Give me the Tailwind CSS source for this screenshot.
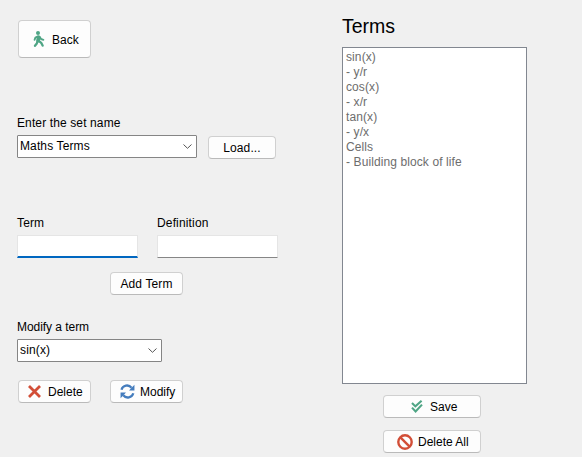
<!DOCTYPE html>
<html lang="en">
<head>
<meta charset="utf-8">
<title>Terms</title>
<script src="https://cdn.jsdelivr.net/npm/@tailwindcss/browser@4"></script>
</head>
<body class="flex h-[457px] w-[582px] overflow-hidden bg-[#f0f0f0] pl-[17px] font-['Liberation_Sans',Arial,sans-serif] text-[12px] leading-4 text-black">
  <main class="flex w-[325px] flex-col items-start pt-5">
    <button class="ml-px flex h-[38px] w-[73px] items-center rounded-[4px] border border-[#d0d0d0] border-b-[#bababa] bg-[#fdfdfd] pl-[14px]">
      <svg class="mr-[7px] h-4 w-3 shrink-0" viewBox="0 0 12 16" fill="none" stroke="#4fa585" stroke-linecap="round" stroke-linejoin="round">
        <circle cx="5" cy="2" r="2" fill="#4fa585" stroke="none"/>
        <path d="M5.6 6 5 9.6" stroke-width="3.6"/>
        <path d="M4.4 5.6 2.4 6.6 1.6 8.8M6.8 6 8 8 10.4 8.8" stroke-width="1.9"/>
        <path d="M4.6 10 3.8 12.5 2 14.8M5.8 9.8 8.2 11.8 9.6 14.6" stroke-width="2.3"/>
      </svg>
      <span class="pt-px">Back</span>
    </button>
    <label class="mt-[57px] tracking-[0.12px]">Enter the set name</label>
    <div class="mt-1 flex items-start">
      <div class="flex h-[23px] w-[180px] items-center justify-between rounded-[1px] border border-[#858585] bg-white pr-1 pl-[2px]">
        <span class="-mt-px tracking-[0.12px]">Maths Terms</span>
        <svg class="h-[5px] w-[9px]" viewBox="0 0 9 5" fill="none" stroke="#555"><path d="M.5.5 4.5 4.3 8.5.5"/></svg>
      </div>
      <button class="mt-px ml-[11px] flex h-[23px] w-[68px] items-center justify-center rounded-[4px] border border-[#d0d0d0] border-b-[#bababa] bg-[#fdfdfd] tracking-[0.12px]">Load...</button>
    </div>
    <div class="mt-[56px] flex gap-[19px] tracking-[0.15px]">
      <div>
        <label class="block">Term</label>
        <div class="mt-1 h-[23px] w-[121px] border border-b-2 border-[#e5e5e5] border-b-[#0067c0] bg-white"></div>
      </div>
      <div>
        <label class="block">Definition</label>
        <div class="mt-1 h-[23px] w-[121px] rounded-[1px] border border-[#e5e5e5] border-b-[#868686] bg-white"></div>
      </div>
    </div>
    <button class="mt-[14px] ml-[93px] flex h-[23px] w-[73px] items-center justify-center rounded-[4px] border border-[#d0d0d0] border-b-[#bababa] bg-[#fdfdfd] tracking-[0.12px]">Add Term</button>
    <label class="mt-6 -tracking-[0.05px]">Modify a term</label>
    <div class="mt-1 flex h-[23px] w-[145px] items-center justify-between rounded-[1px] border border-[#858585] bg-white pr-1 pl-[2px]">
      <span class="-mt-px tracking-[0.15px]">sin(x)</span>
      <svg class="h-[5px] w-[9px]" viewBox="0 0 9 5" fill="none" stroke="#555"><path d="M.5.5 4.5 4.3 8.5.5"/></svg>
    </div>
    <div class="mt-[18px] ml-px flex gap-[19px]">
      <button class="flex h-[23px] w-[73px] items-center rounded-[4px] border border-[#d0d0d0] border-b-[#bababa] bg-[#fdfdfd] pl-[9px]">
        <svg class="mr-[7px] h-[13px] w-[13px] shrink-0" viewBox="0 0 13 13" stroke="#d24e37" stroke-width="2.8"><path d="M1 1 12 12M12 1 1 12"/></svg>
        <span>Delete</span>
      </button>
      <button class="flex h-[23px] w-[73px] items-center rounded-[4px] border border-[#d0d0d0] border-b-[#bababa] bg-[#fdfdfd] pl-[9px]">
        <svg class="mr-[5px] h-[15px] w-[15px] shrink-0" viewBox="0 0 16 15" preserveAspectRatio="none">
          <path d="M1.6 5.8A6.1 5.6 0 0 1 12.3 3.7M14.2 9.2A6.1 5.6 0 0 1 3.5 11.3" fill="none" stroke="#447cbd" stroke-width="2.4"/>
          <path d="M15.4.8V6.5H9.6ZM.6 14.2V8.5H6.4Z" fill="#447cbd"/>
        </svg>
        <span>Modify</span>
      </button>
    </div>
  </main>
  <section class="flex w-[185px] flex-col pt-4">
    <h1 class="h-[31px] text-[19.5px] leading-[21px]">Terms</h1>
    <div class="h-[337px] border border-[#828790] bg-white pt-[2px] pl-[3px] leading-[15px] tracking-[0.1px] text-[#6d6d6d]">
      <div>sin(x)</div><div>- y/r</div><div>cos(x)</div><div>- x/r</div><div>tan(x)</div><div>- y/x</div><div>Cells</div><div>- Building block of life</div>
    </div>
    <div class="mt-[11px] ml-[41px] flex w-[98px] flex-col gap-3">
      <button class="flex h-[23px] items-center rounded-[4px] border border-[#d0d0d0] border-b-[#bababa] bg-[#fdfdfd] pl-[27px]">
        <svg class="mr-[7px] h-[13px] w-3 shrink-0" viewBox="0 0 12 13" fill="none" stroke="#4fa585" stroke-width="2.1"><path d="M1 3 4.4 6.4 10.6.8M1 7.6 4.6 11.4 11 4.6"/></svg>
        <span>Save</span>
      </button>
      <button class="flex h-[23px] items-center rounded-[4px] border border-[#d0d0d0] border-b-[#bababa] bg-[#fdfdfd] pl-[13px]">
        <svg class="mr-[5px] h-4 w-4 shrink-0" viewBox="0 0 16 16" fill="none" stroke="#d24e37" stroke-width="2.4"><circle cx="8" cy="8" r="6.7"/><path d="M3.4 3.4 12.6 12.6"/></svg>
        <span>Delete All</span>
      </button>
    </div>
  </section>
</body>
</html>
